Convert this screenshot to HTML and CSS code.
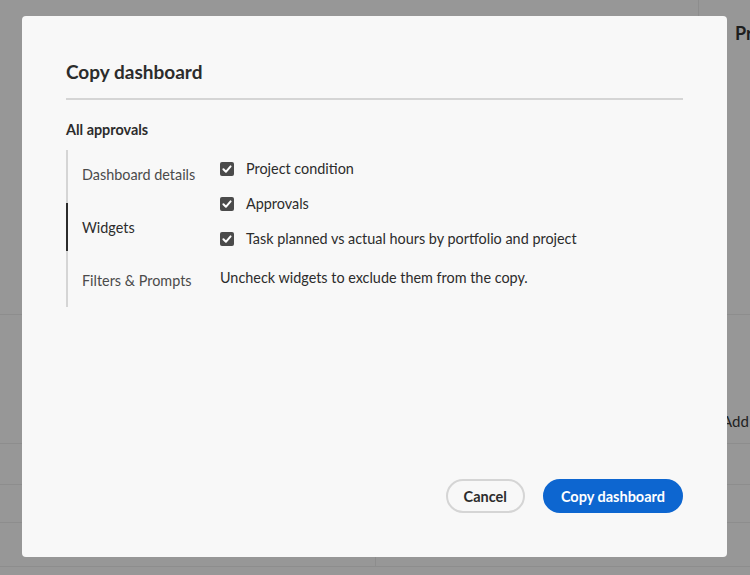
FILE: index.html
```html
<!DOCTYPE html>
<html lang="en">
<head>
    <meta charset="UTF-8">
    <meta name="viewport" content="width=device-width, initial-scale=1.0">
    <title>Copy dashboard</title>
    <link rel="stylesheet" href="styles.css">
</head>
<body>
    <!-- page behind the modal (dimmed) -->
    <div class="page">
        <div class="page_top">
            <div class="page_main"></div>
            <div class="page_side"><h3>Project</h3></div>
        </div>
        <div class="page_row row_a"><span class="add_link">Add widget</span></div>
        <div class="page_row row_b"></div>
        <div class="page_row row_c"></div>
        <div class="page_row row_d">
            <div class="cell"></div>
            <div class="cell"></div>
        </div>
    </div>

    <!-- modal -->
    <div class="dialog">
        <h2 class="dialog_title">Copy dashboard</h2>
        <hr class="dialog_divider">
        <div class="section_name">All approvals</div>

        <div class="dialog_body">
            <ul class="steps">
                <li>Dashboard details</li>
                <li class="active">Widgets</li>
                <li>Filters &amp; Prompts</li>
            </ul>

            <div class="widgets">
                <label class="check_row"><span class="box"><svg viewBox="0 0 14 14" width="14" height="14"><path d="M3.4 7.3 L5.9 9.8 L10.6 4.4" fill="none" stroke="#fff" stroke-width="2" stroke-linecap="round" stroke-linejoin="round"/></svg></span>Project condition</label>
                <label class="check_row"><span class="box"><svg viewBox="0 0 14 14" width="14" height="14"><path d="M3.4 7.3 L5.9 9.8 L10.6 4.4" fill="none" stroke="#fff" stroke-width="2" stroke-linecap="round" stroke-linejoin="round"/></svg></span>Approvals</label>
                <label class="check_row"><span class="box"><svg viewBox="0 0 14 14" width="14" height="14"><path d="M3.4 7.3 L5.9 9.8 L10.6 4.4" fill="none" stroke="#fff" stroke-width="2" stroke-linecap="round" stroke-linejoin="round"/></svg></span>Task planned vs actual hours by portfolio and project</label>
                <p class="hint">Uncheck widgets to exclude them from the copy.</p>
            </div>
        </div>

        <div class="dialog_buttons">
            <button class="btn btn_secondary">Cancel</button>
            <button class="btn btn_primary">Copy dashboard</button>
        </div>
    </div>
</body>
</html>
```

FILE: styles.css
```css
html, body{
    margin: 0; padding: 0;
    width: 750px; height: 575px; overflow: hidden;
}
body{
    background-color: #979797;
    font-family: Lato, "Noto Sans", sans-serif;
    color: #2c2c2c;
    position: relative;
}

/* dimmed page */
.page{ display: flex; flex-direction: column; height: 575px; }
.page_top{ display: flex; height: 315px; border-bottom: 1px solid #8d8d8d; box-sizing: border-box; }
.page_main{ flex: 1; }
.page_side{
    width: 52px; box-sizing: border-box; padding-left: 36px;
    border-left: 1px solid #8d8d8d; overflow: hidden;
}
.page_side h3{
    margin: 22px 0 0; font-size: 18px; font-weight: 700;
    color: #1e1e1e; white-space: nowrap;
}
.page_row{ border-bottom: 1px solid #8d8d8d; box-sizing: border-box; }
.row_a{ height: 129px; display: flex; justify-content: flex-end; overflow: hidden; }
.add_link{
    margin-top: 97px; width: 28px; white-space: nowrap; overflow: hidden;
    font-size: 15px; color: #222;
}
.row_b{ height: 41px; }
.row_c{ height: 38px; }
.row_d{ height: 44px; display: flex; }
.row_d .cell{ flex: 1; }
.row_d .cell + .cell{ border-left: 1px solid #8d8d8d; }

/* modal */
.dialog{
    position: absolute; left: 22px; top: 16px;
    width: 705px; height: 541px; box-sizing: border-box;
    padding: 44px 44px 44px;
    background-color: #f8f8f8; border-radius: 4px;
    display: flex; flex-direction: column;
}
.dialog_title{
    margin: 0; font-size: 19px; line-height: 24px; font-weight: 700; color: #2c2c2c;
}
.dialog_divider{
    margin: 14px 0 0; border: 0; height: 2px; background-color: #d5d5d5;
}
.section_name{
    margin-top: 20px; font-size: 14.4px; line-height: 20px; font-weight: 700;
}
.dialog_body{ display: flex; margin-top: 10px; }

.steps{
    list-style: none; margin: 0; padding: 0 0 3px;
    width: 152px; border-left: 2px solid #d5d5d5;
    display: flex; flex-direction: column; gap: 5px;
}
.steps li{
    height: 48px; margin-left: -2px; padding-left: 14px;
    border-left: 2px solid transparent;
    display: flex; align-items: center;
    font-size: 14.4px; color: #4b4b4b;
}
.steps li.active{ border-left-color: #2c2c2c; color: #2c2c2c; }

.widgets{ padding-top: 1px; }
.check_row{
    height: 35px; display: flex; align-items: center; gap: 12px;
    font-size: 14.4px; color: #2c2c2c;
}
.box{
    width: 14px; height: 14px; border-radius: 2px;
    background-color: #4b4b4b; display: flex;
}
.hint{ margin: 12px 0 0; font-size: 14.4px; line-height: 20px; }

.dialog_buttons{
    margin-top: auto; display: flex; justify-content: flex-end; gap: 18px;
}
.btn{
    height: 34px; padding: 0 16px; border-radius: 17px;
    font-family: inherit; font-size: 14.5px; font-weight: 700;
    border: 2px solid; box-sizing: border-box;
}
.btn_secondary{ background-color: #f8f8f8; border-color: #d5d5d5; color: #2c2c2c; }
.btn_primary{ background-color: #0d66d0; border-color: #0d66d0; color: #fff; }
```
